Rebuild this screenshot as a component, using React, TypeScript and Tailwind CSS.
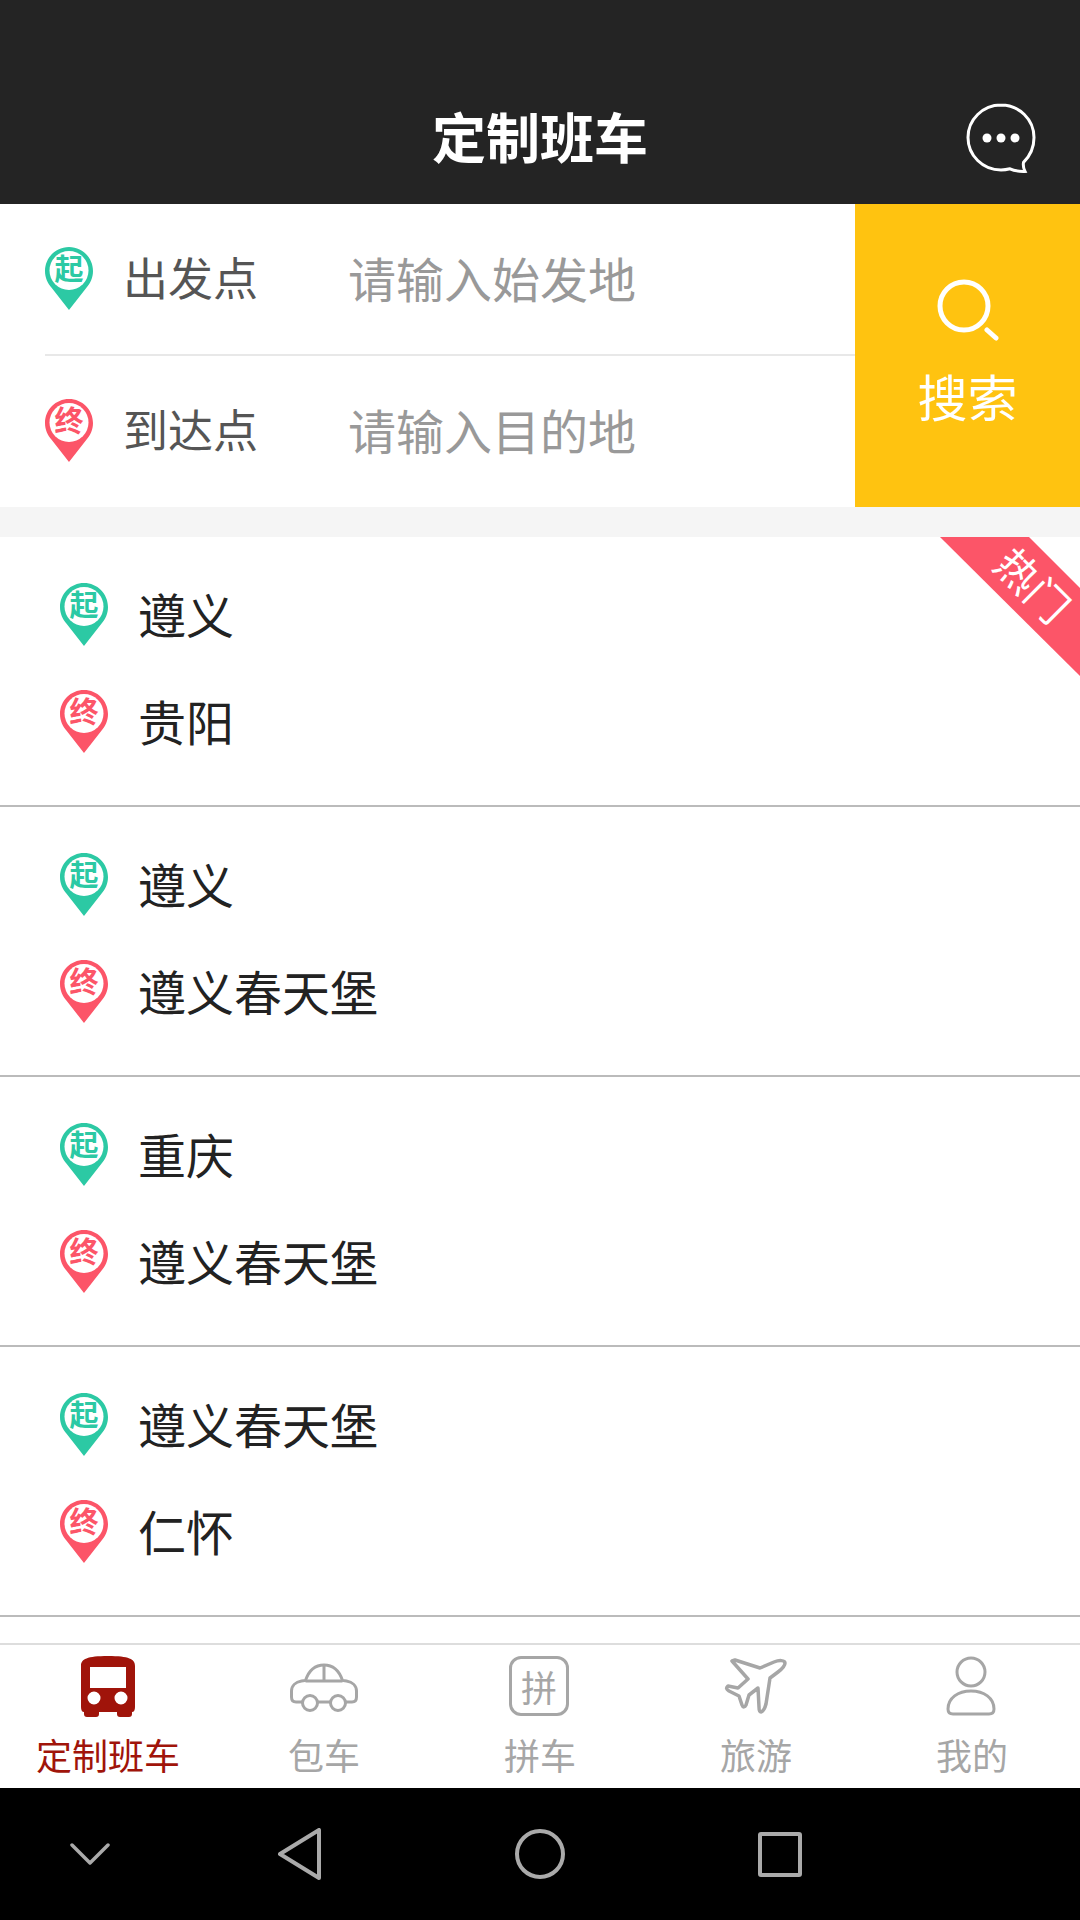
const font = { fontFamily: '"Noto Sans CJK SC", "Noto Sans", sans-serif' }

const routes = [
  { from: "遵义", to: "贵阳" },
  { from: "遵义", to: "遵义春天堡" },
  { from: "重庆", to: "遵义春天堡" },
  { from: "遵义春天堡", to: "仁怀" },
]

const Pin = ({ type }: { type: "start" | "end" }) => {
  const color = type === "start" ? "#2CC9A4" : "#FC5568"
  return (
    <div className="relative w-[48px] h-[63px] shrink-0">
      <svg width="48" height="63" viewBox="0 0 48 63">
        <path d="M24 0C10.7 0 0 10.7 0 24c0 6.5 2.6 12.3 6.6 16.7L24 63l17.4-22.3C45.4 36.3 48 30.5 48 24 48 10.7 37.3 0 24 0z" fill={color} />
        <circle cx="24" cy="23.5" r="19.5" fill="#fff" />
      </svg>
      <span
        className="absolute left-0 top-0 w-[48px] text-center text-[29px] leading-[40px] font-bold"
        style={{ color }}
      >
        {type === "start" ? "起" : "终"}
      </span>
    </div>
  )
}

const RouteRow = ({ type, label }: { type: "start" | "end"; label: string }) => (
  <div className="flex items-center h-[63px]">
    <Pin type={type} />
    <span className="ml-[30px] text-[48px] leading-[61px] h-[63px] text-[#222]">{label}</span>
  </div>
)

const TabIcon = ({ name }: { name: string }) => {
  if (name === "bus")
    return (
      <svg width="54" height="61" viewBox="0 0 54 61">
        <path
          fillRule="evenodd"
          fill="#A0140A"
          d="M0 10C0 3 6 0 27 0s27 3 27 10v41c0 3-1 5-3 5v2c0 2-1 3-3 3h-9c-2 0-3-1-3-3v-2H18v2c0 2-1 3-3 3H6c-2 0-3-1-3-3v-2c-2 0-3-2-3-5zM9 11v21h36V11zM13 35.500a6.500 6.500 0 1 0 0 13 6.500 6.500 0 0 0 0-13zM40 35.500a6.500 6.500 0 1 0 0 13 6.500 6.500 0 0 0 0-13z"
        />
      </svg>
    )
  if (name === "car")
    return (
      <svg className="mt-[3px]" width="68" height="50" viewBox="0 0 68 50" fill="none" stroke="#A6A6A6" strokeWidth="3">
        <path d="M12 39H6c-3 0-4.500-2-4.500-5v-6c0-5 4-9 10-10l4-.500C19 7 26 2 34 2s15 5 18.500 15.500l4 .500c6 1 10 5 10 10v6c0 3-1.500 5-4.500 5h-6M28 39h12" />
        <path d="M15.500 18h37M34 2v16" />
        <circle cx="20" cy="40" r="7.500" />
        <circle cx="48" cy="40" r="7.500" />
      </svg>
    )
  if (name === "pin")
    return (
      <div className="w-[60px] h-[60px] -ml-[2px] border-[3px] border-[#A6A6A6] rounded-[12px] flex items-center justify-center text-[36px] leading-none text-[#A6A6A6]">
        拼
      </div>
    )
  if (name === "plane")
    return (
      <svg className="-ml-[2px]" width="66" height="56" viewBox="0 0 64 56" fill="none" stroke="#A6A6A6" strokeWidth="3.500" strokeLinejoin="round">
        <path d="M9 3l3-1 25 8 14-6c5-2 11-2 11 1 0 3-3 6-7 9l-8 6-4 26c-1 4-3 7-5 8-2 0-2-3-2-5l-1-19-9 7-3 10c-1 2-3 3-4 0l-3-9-10-5c-3-2-3-3-1-5l10 2 10-9z" />
      </svg>
    )
  return (
    <svg className="-ml-[2px]" width="50" height="60" viewBox="0 0 50 60" fill="none" stroke="#A6A6A6" strokeWidth="3">
      <circle cx="25" cy="16" r="14" />
      <path d="M25 35c-13 0-23 7-23 18 0 3 1 5 5 5h36c4 0 5-2 5-5 0-11-10-18-23-18z" />
    </svg>
  )
}

const tabs = [
  { icon: "bus", label: "定制班车", active: true },
  { icon: "car", label: "包车" },
  { icon: "pin", label: "拼车" },
  { icon: "plane", label: "旅游" },
  { icon: "user", label: "我的" },
]

export default function App() {
  return (
    <div className="w-[1080px] h-[1920px] flex flex-col bg-white overflow-hidden" style={font}>
      {/* top bar */}
      <header className="relative h-[204px] shrink-0 bg-[#242424] flex items-center justify-center pt-[68px]">
        <h1 className="text-[54px] leading-[60px] font-bold text-white">定制班车</h1>
        <svg className="absolute left-[966px] top-[103px]" width="70" height="70" viewBox="0 0 70 70" fill="none">
          <path
            d="M35 2C16.800 2 2 16.500 2 34.500S16.800 67 35 67c3 0 6-.400 9-1.200 4 2 9 2.800 15 2.600-1.500-3-2-6-1.500-9C64 53 68 44 68 34.500 68 16.500 53.200 2 35 2z"
            stroke="#fff"
            strokeWidth="3"
          />
          <circle cx="21" cy="35" r="4.500" fill="#fff" />
          <circle cx="35" cy="35" r="4.500" fill="#fff" />
          <circle cx="49" cy="35" r="4.500" fill="#fff" />
        </svg>
      </header>

      {/* search form */}
      <section className="h-[303px] shrink-0 flex">
        <div className="flex-1 pl-[45px] flex flex-col">
          <div className="h-[152px] flex items-center pb-[2px] border-b-2 border-[#E8E8E8]">
            <Pin type="start" />
            <span className="ml-[30px] w-[225px] text-[45px] leading-[60px] mb-[3px] text-[#555]">出发点</span>
            <span className="text-[48px] leading-[60px] mb-[3px] text-[#999]">请输入始发地</span>
          </div>
          <div className="h-[151px] flex items-center pb-[2px]">
            <Pin type="end" />
            <span className="ml-[30px] w-[225px] text-[45px] leading-[60px] mb-[3px] text-[#555]">到达点</span>
            <span className="text-[48px] leading-[60px] mb-[3px] text-[#999]">请输入目的地</span>
          </div>
        </div>
        <div className="w-[225px] bg-[#FFC310] flex flex-col items-center pt-[75px]">
          <svg width="62" height="62" viewBox="0 0 62 62" fill="none" stroke="#fff" strokeWidth="5">
            <circle cx="27" cy="27" r="24" />
            <path d="M50 51l9 8" strokeLinecap="round" />
          </svg>
          <span className="mt-[19px] text-[50px] leading-[70px] text-white">搜索</span>
        </div>
      </section>

      <div className="h-[30px] shrink-0 bg-[#F5F5F5]" />

      {/* route list */}
      <main className="relative flex-1">
        {routes.map((route, i) => (
          <div
            key={i}
            className="h-[270px] border-b-2 border-[#BBB] pl-[60px] pt-[46px] flex flex-col gap-[44px]"
          >
            <RouteRow type="start" label={route.from} />
            <RouteRow type="end" label={route.to} />
          </div>
        ))}
        <svg className="absolute right-0 top-0" width="140" height="140" viewBox="0 0 140 140">
          <path d="M0 0h89l51 51v88z" fill="#FC5568" />
        </svg>
        <span className="absolute left-[992px] top-[26px] text-[42px] leading-none text-white rotate-45">
          热门
        </span>
      </main>

      {/* tabs */}
      <nav className="h-[145px] shrink-0 border-t-2 border-[#DDD] grid grid-cols-5">
        {tabs.map((tab) => (
          <div key={tab.label} className="flex flex-col items-center">
            <div className="h-[76px] flex items-center justify-center pt-[6px]">
              <TabIcon name={tab.icon} />
            </div>
            <span
              className={`text-[36px] leading-[50px] mt-[8px] ${tab.active ? "text-[#A0140A]" : "text-[#A6A6A6]"}`}
            >
              {tab.label}
            </span>
          </div>
        ))}
      </nav>

      {/* android nav */}
      <footer className="h-[132px] shrink-0 bg-black">
        <div className="h-full grid grid-cols-[180px_240px_240px_240px] items-center justify-items-center">
          <svg width="40" height="24" viewBox="0 0 40 24" fill="none" stroke="#AAA" strokeWidth="3.500" strokeLinecap="round" strokeLinejoin="round">
            <path d="M2 3l18 18L38 3" />
          </svg>
          <svg width="44" height="52" viewBox="0 0 44 52" fill="none" stroke="#AAA" strokeWidth="4" strokeLinejoin="round">
            <path d="M2 26L41 2v48z" />
          </svg>
          <div className="w-[50px] h-[50px] rounded-full border-4 border-[#AAA]" />
          <div className="w-[44px] h-[45px] rounded-[3px] border-4 border-[#AAA]" />
        </div>
      </footer>
    </div>
  )
}
